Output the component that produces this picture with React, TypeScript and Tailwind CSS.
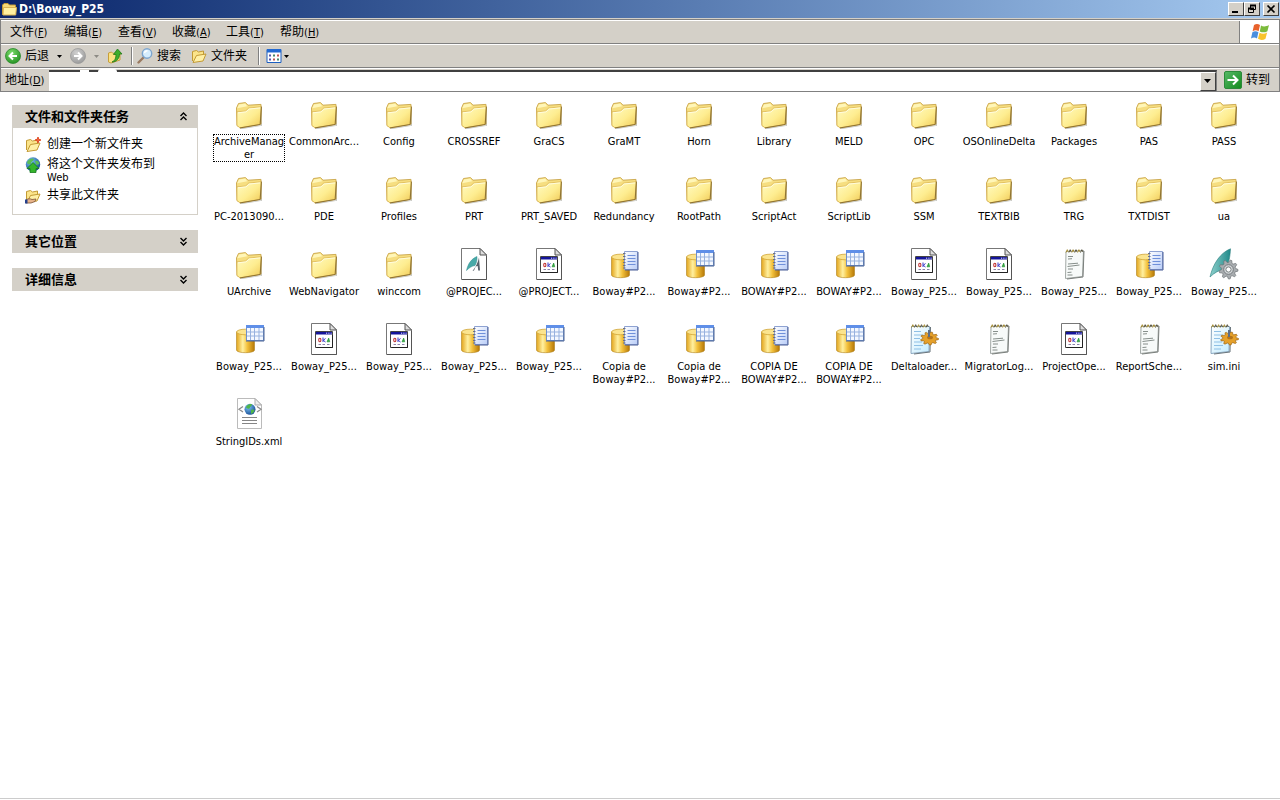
import type { ReactNode } from "react";

type Kind = "folder" | "pdl" | "win" | "dbLog" | "dbTable" | "note" | "ini" | "project" | "xml";

type Entry = { kind: Kind; lines: string[]; focused?: boolean };

const folder = (name: string): Entry => ({ kind: "folder", lines: [name] });
const file = (kind: Kind, ...lines: string[]): Entry => ({ kind, lines });

const entries: Entry[] = [
  { kind: "folder", lines: ["ArchiveManag", "er"], focused: true },
  ...[
    "CommonArc...", "Config", "CROSSREF", "GraCS", "GraMT", "Horn", "Library", "MELD", "OPC",
    "OSOnlineDelta", "Packages", "PAS", "PASS", "PC-2013090...", "PDE", "Profiles", "PRT",
    "PRT_SAVED", "Redundancy", "RootPath", "ScriptAct", "ScriptLib", "SSM", "TEXTBIB", "TRG",
    "TXTDIST", "ua", "UArchive", "WebNavigator", "winccom",
  ].map(folder),
  file("pdl", "@PROJEC..."),
  file("win", "@PROJECT..."),
  file("dbLog", "Boway#P2..."),
  file("dbTable", "Boway#P2..."),
  file("dbLog", "BOWAY#P2..."),
  file("dbTable", "BOWAY#P2..."),
  file("win", "Boway_P25..."),
  file("win", "Boway_P25..."),
  file("note", "Boway_P25..."),
  file("dbLog", "Boway_P25..."),
  file("project", "Boway_P25..."),
  file("dbTable", "Boway_P25..."),
  file("win", "Boway_P25..."),
  file("win", "Boway_P25..."),
  file("dbLog", "Boway_P25..."),
  file("dbTable", "Boway_P25..."),
  file("dbLog", "Copia de", "Boway#P2..."),
  file("dbTable", "Copia de", "Boway#P2..."),
  file("dbLog", "COPIA DE", "BOWAY#P2..."),
  file("dbTable", "COPIA DE", "BOWAY#P2..."),
  file("ini", "Deltaloader..."),
  file("note", "MigratorLog..."),
  file("win", "ProjectOpe..."),
  file("note", "ReportSche..."),
  file("ini", "sim.ini"),
  file("xml", "StringIDs.xml"),
];

function Gradients() {
  return (
    <svg className="absolute size-0" aria-hidden="true">
      <defs>
        <linearGradient id="gFolder" x1="0" y1="0" x2="1" y2="1">
          <stop offset="0" stopColor="#fffbc4" />
          <stop offset="0.55" stopColor="#feed90" />
          <stop offset="1" stopColor="#f0c955" />
        </linearGradient>
        <linearGradient id="gCyl" x1="0" y1="0" x2="1" y2="0">
          <stop offset="0" stopColor="#e3a51c" />
          <stop offset="0.35" stopColor="#fff0a0" />
          <stop offset="0.6" stopColor="#f3c13c" />
          <stop offset="1" stopColor="#b57706" />
        </linearGradient>
        <linearGradient id="gSheet" x1="0" y1="0" x2="1" y2="1">
          <stop offset="0" stopColor="#ffffff" />
          <stop offset="1" stopColor="#b9cdf8" />
        </linearGradient>
        <linearGradient id="gIni" x1="0" y1="0" x2="1" y2="1">
          <stop offset="0" stopColor="#ffffff" />
          <stop offset="1" stopColor="#c3ecff" />
        </linearGradient>
        <linearGradient id="gTeal" x1="0" y1="0" x2="1" y2="0">
          <stop offset="0" stopColor="#8fd0cc" />
          <stop offset="1" stopColor="#1f8a8a" />
        </linearGradient>
        <linearGradient id="gGo" x1="0" y1="0" x2="1" y2="1">
          <stop offset="0" stopColor="#58b968" />
          <stop offset="1" stopColor="#128a1c" />
        </linearGradient>
        <radialGradient id="gGreen" cx="0.4" cy="0.3" r="0.8">
          <stop offset="0" stopColor="#7bdc6a" />
          <stop offset="1" stopColor="#1d8a1d" />
        </radialGradient>
        <radialGradient id="gGray" cx="0.4" cy="0.3" r="0.8">
          <stop offset="0" stopColor="#d0d0d0" />
          <stop offset="1" stopColor="#959595" />
        </radialGradient>
        <radialGradient id="gGlobe" cx="0.35" cy="0.3" r="0.8">
          <stop offset="0" stopColor="#7cc4f4" />
          <stop offset="1" stopColor="#12458f" />
        </radialGradient>
      </defs>
    </svg>
  );
}

function Svg({ size = 32, children }: { size?: 16 | 32; children: ReactNode }) {
  return (
    <svg className={size === 32 ? "size-8 shrink-0" : "size-4 shrink-0"} viewBox={`0 0 ${size} ${size}`} aria-hidden="true">
      {children}
    </svg>
  );
}

function FolderArt() {
  return (
    <>
      <path d="M6 30.3 28 27.2V9l1 .5v18.3L9 31z" fill="#77776a" opacity="0.45" />
      <path d="M3.5 10 5.5 5.5 12.5 4.6 15 7.2 28 6.4V26L7.5 29.7 4 27.5z" fill="#f6de80" stroke="#c9a548" strokeWidth="0.9" strokeLinejoin="round" />
      <path d="M4.2 10.2 6 6.4 12.2 5.5 14.3 8.2z" fill="#fff6b8" />
      <path d="M4 13.8 12.5 13 15.8 10 28.2 8.8 27 26.4 7 29.8 4 27.6z" fill="url(#gFolder)" stroke="#d8b04c" strokeWidth="0.7" strokeLinejoin="round" />
      <path d="M28.4 8.6 27.2 26.5 7 29.9" fill="none" stroke="#8d7232" strokeWidth="1" />
      <path d="M5 14.8 13 13.9 16.2 11 27.2 9.9" fill="none" stroke="#fffde2" strokeWidth="0.9" />
    </>
  );
}

function Page() {
  return (
    <>
      <path d="M3.5.5H22L28.5 7V31.5H3.5z" fill="#fff" stroke="#777" />
      <path d="M22 .5 28.5 7H22z" fill="#ddd" stroke="#555" />
      <path d="M4 31.5H28.5V8" fill="none" stroke="#555" />
    </>
  );
}

function Cylinder() {
  return (
    <>
      <path d="M3.5 9v18c0 3.6 18 3.6 18 0V9z" fill="url(#gCyl)" stroke="#b0831f" strokeWidth="0.6" />
      <ellipse cx="12.5" cy="9" rx="9" ry="2.8" fill="#fbe48e" stroke="#d1a436" strokeWidth="0.8" />
    </>
  );
}

function Gear({ cx, cy, rx, ry, color, edge }: { cx: number; cy: number; rx: number; ry: number; color: string; edge: string }) {
  const pts = Array.from({ length: 36 }, (_, i) => {
    const a = (i * Math.PI) / 18;
    const k = i % 4 < 2 ? 1 : 0.74;
    return `${(cx + Math.cos(a) * rx * k).toFixed(2)},${(cy + Math.sin(a) * ry * k).toFixed(2)}`;
  }).join(" ");
  return <polygon points={pts} fill={color} stroke={edge} strokeWidth="0.7" strokeLinejoin="round" />;
}

function Spiral({ x, n }: { x: number; n: number }) {
  return (
    <>
      {Array.from({ length: n }, (_, i) => (
        <path key={i} d={`M${x + i * 2.9} 4.5l1.3-2.8 1 2.2`} fill="none" stroke={i % 2 ? "#55503a" : "#a58a2c"} strokeWidth="1" />
      ))}
    </>
  );
}

function FileIcon({ kind }: { kind: Kind }) {
  switch (kind) {
    case "folder":
      return <Svg><FolderArt /></Svg>;
    case "pdl":
      return (
        <Svg>
          <Page />
          <path d="M8.5 22.500C10 16 13 11 19 8.500c.2 3.500-.5 6.500-2 9-3 .5-5.500 2-8.500 5z" fill="#48aaa8" stroke="#2f8a8c" strokeWidth="0.500" />
          <path d="M14.500 23C17.500 19 20 14.500 21 9.500L22 22.500h-1.800l-.5-4.500-2 .5-1.700 4z" fill="#59636c" />
        </Svg>
      );
    case "win":
      return (
        <Svg>
          <Page />
          <path d="M7.500 8.500H24.500V24.500H7.500z" fill="#fff" stroke="#444" />
          <path d="M8 9h16v2.500H8z" fill="#14149a" />
          <path d="M18 10.200h1.200M20.300 10.200h1.200M22.600 10.200h1" stroke="#e6e8ff" />
          <path d="M8.500 24.500h16V12" fill="none" stroke="#222" />
          <ellipse cx="11.800" cy="17" rx="1.100" ry="1.800" fill="none" stroke="#c03030" strokeWidth="1.100" />
          <path d="M15 14.500v4.500M17.500 15.500 15.300 17.300 17.500 19" fill="none" stroke="#3434c8" strokeWidth="1" />
          <path d="M19 18.800 20.700 15l1 3.800z" fill="#38b048" stroke="#1a8a2c" strokeWidth="0.600" />
          <path d="M10.500 21.500h2.500M14.500 21.500h2.500M19 21.500h2.500" stroke="#8a80a8" />
        </Svg>
      );
    case "dbLog":
      return (
        <Svg>
          <Cylinder />
          <path d="M16.500 3.500H29.500V21.500H16.500z" fill="url(#gSheet)" stroke="#8ea2d2" />
          <path d="M30 4v18H17" fill="none" stroke="#4a5f98" />
          <path d="M19.500 7.500h8M19.500 10.500h8M19.500 13.500h8M19.500 16.500h8" stroke="#6f90da" />
          <path d="M15 5.500h2.500M15 8.500h2.500M15 11.500h2.500M15 14.500h2.500M15 17.500h2.500M15 20h2.500" stroke="#6a7084" />
        </Svg>
      );
    case "dbTable":
      return (
        <Svg>
          <Cylinder />
          <path d="M13.500 2.500H30.500V17.500H13.500z" fill="#f4f8ff" stroke="#6f8fca" />
          <path d="M13 2h18v3H13z" fill="#5f8fe8" />
          <path d="M17.500 5v12M21.500 5v12M26 5v12M14 9h16.500M14 13h16.500" stroke="#97b2df" />
          <path d="M13 18h18V4" fill="none" stroke="#4d6495" />
        </Svg>
      );
    case "note":
      return (
        <Svg>
          <path d="M8 3.500 25.500 2.500 24.500 28.500 7.500 30.500z" fill="#f7faf9" stroke="#a2a8a5" />
          <path d="M26 3 25 29 9 31" fill="none" stroke="#7a7f7c" />
          <Spiral x={8} n={6} />
          <path d="M10 8.500h5M10 11l4-.3M10 16l10-.8M9.500 18.500l12-1.500M10 21h5M9.500 24.500l4-.3M9.500 27h5" stroke="#79827e" strokeWidth="0.9" />
        </Svg>
      );
    case "ini":
      return (
        <Svg>
          <path d="M3.500 3.500H21.500L21 28.500 3 30.500z" fill="url(#gIni)" stroke="#8ba8c0" />
          <path d="M22.500 4 22 29 6 31" fill="none" stroke="#69757c" />
          <Spiral x={3.500} n={6} />
          <path d="M6 8.500h7M6 12h9M6 15.500h6M6 19h8M6 22.500h9M6 26h7" stroke="#8fc0e6" />
          <Gear cx={21.500} cy={15.500} rx={9} ry={6.500} color="#e5a02a" edge="#9c6412" />
          <ellipse cx="22" cy="14.500" rx="3" ry="1.800" fill="#b4741a" />
          <path d="M21 7v7" stroke="#5c6d86" strokeWidth="2" />
        </Svg>
      );
    case "project":
      return (
        <Svg>
          <path d="M2 29C5 16 12 5 22.500.8 22 9 21 16 17 21 11 22 6 25 2 29z" fill="url(#gTeal)" stroke="#2d7f80" strokeWidth="0.6" />
          <Gear cx={20.500} cy={21.500} rx={9.500} ry={9.500} color="#a9adb0" edge="#6d7276" />
          <circle cx="20.500" cy="21.500" r="4.800" fill="#d6d9db" stroke="#74797c" />
          <circle cx="20.500" cy="21.500" r="2.600" fill="#fff" stroke="#787f80" />
        </Svg>
      );
    case "xml":
      return (
        <Svg>
          <path d="M4.500.5H22L28.500 7V30.500H4.500z" fill="#fff" stroke="#bbb" />
          <path d="M22 .5V7h6.500z" fill="#eee" stroke="#aaa" />
          <path d="M10 8.500 6 11.300 10 14M24 8.500l4 2.800-4 2.700" fill="none" stroke="#8a8a8a" strokeWidth="1.300" />
          <circle cx="17" cy="11.300" r="5.500" fill="url(#gGlobe)" />
          <path d="M13 9c2-3 5-3.500 6-2.500-.5 2-2 2-2.500 4-1.500.5-3 0-3.500-1.500zM18 12c2-1 3.500 0 3.500.5-.5 2-2 3-3.500 3.500z" fill="#4fb54a" />
          <path d="M9 19.500h15M9 22.500h15M9 25.500h15" stroke="#858585" />
        </Svg>
      );
  }
}

function SmallFolder() {
  return (
    <Svg size={16}>
      <path d="M.5 4 2 2.500h4L7.500 4h6v9.500H.5z" fill="#f5d876" stroke="#c39a34" />
      <path d="M1.500 6.500h13l-.8 7.500H1z" fill="#fff0a0" stroke="#d9b352" />
    </Svg>
  );
}

function OpenFolderPaths() {
  return (
    <>
      <path d="M1.500 13V3.500l4-1L7.500 4l5-1v4" fill="#fbe48a" stroke="#c39a34" />
      <path d="M2 14.500 5.500 7.500l9.500-1.500-3 7z" fill="#fff0a6" stroke="#c39a34" strokeLinejoin="round" />
    </>
  );
}

function Disc({ gray = false }: { gray?: boolean }) {
  return (
    <Svg size={16}>
      <circle cx="8" cy="8" r="7.500" fill={gray ? "url(#gGray)" : "url(#gGreen)"} stroke={gray ? "#9a9a9a" : "#2b8a2b"} strokeWidth="0.800" />
      <path d={gray ? "M4 8h7M8 4.500 11.500 8 8 11.500" : "M12 8H5M8 4.500 4.500 8 8 11.500"} fill="none" stroke="#fff" strokeWidth="2" />
    </Svg>
  );
}

function Caret({ dim = false }: { dim?: boolean }) {
  return (
    <svg className="h-[3px] w-[5px] shrink-0" viewBox="0 0 5 3" aria-hidden="true">
      <path d="M0 0h5L2.500 3z" fill={dim ? "#8c8a84" : "#000"} />
    </svg>
  );
}

function Chevrons({ up = false }: { up?: boolean }) {
  return (
    <svg className="h-[9px] w-[7px]" viewBox="0 0 7 9" aria-hidden="true">
      <path
        d={up ? "M.5 4 3.500 1l3 3M.5 8l3-3 3 3" : "M.5 1l3 3 3-3M.5 5l3 3 3-3"}
        fill="none"
        stroke="#000"
        strokeWidth="1.400"
      />
    </svg>
  );
}

function Accel({ k }: { k: string }) {
  return <span className="text-[11px]">(<u>{k}</u>)</span>;
}

function CaptionButton({ label, children }: { label: string; children: ReactNode }) {
  return (
    <button
      aria-label={label}
      className="flex h-[14px] w-4 items-center justify-center border border-t-white border-l-white border-r-[#404040] border-b-[#404040] bg-[#d4d0c8]"
    >
      <svg className="h-[10px] w-3" viewBox="0 0 12 10" aria-hidden="true">{children}</svg>
    </button>
  );
}

function TaskHeader({ title, open = false }: { title: string; open?: boolean }) {
  return (
    <button className="flex h-[23px] w-full items-center justify-between bg-[#d4d0c8] pr-[11px] pl-[13px] text-[13px] font-bold" aria-expanded={open}>
      <span>{title}</span>
      <Chevrons up={open} />
    </button>
  );
}

function Task({ icon, children }: { icon: ReactNode; children: ReactNode }) {
  return (
    <li>
      <a href="#task" className="flex gap-[6px] leading-[13px]">
        {icon}
        <span className="pt-px">{children}</span>
      </a>
    </li>
  );
}

const menus: [string, string][] = [
  ["文件", "F"],
  ["编辑", "E"],
  ["查看", "V"],
  ["收藏", "A"],
  ["工具", "T"],
  ["帮助", "H"],
];

export default function App() {
  return (
    <div className="flex min-h-screen flex-col bg-white font-['DejaVu_Sans_Condensed','DejaVu_Sans','Noto_Sans_CJK_SC',sans-serif] text-[12px] leading-[14px] text-black">
      <Gradients />
      <header className="bg-[#d4d0c8]">
        <div className="flex h-[18px] items-center bg-linear-to-r from-[#0a246a] to-[#a6caf0] pr-px pl-[2px]">
          <SmallFolder />
          <h1 className="ml-px grow text-[12px] font-bold text-white">D:\Boway_P25</h1>
          <div className="flex">
            <CaptionButton label="最小化"><path d="M2 8h6" stroke="#000" strokeWidth="2" /></CaptionButton>
            <CaptionButton label="还原">
              <path d="M4.500 1.500h5v4h-5zM2.500 4.500h5v4h-5z" fill="#d4d0c8" stroke="#000" />
              <path d="M4 1.500h6M2 4.500h6" stroke="#000" strokeWidth="2" />
            </CaptionButton>
            <span className="w-[3px]" />
            <CaptionButton label="关闭"><path d="M2.500 1.500l7 7M9.500 1.500l-7 7" stroke="#000" strokeWidth="1.700" /></CaptionButton>
          </div>
        </div>

        <div className="mt-px border-x border-t border-[#808080]">
          <nav className="flex h-6 border-t border-b border-t-white border-b-[#808080]">
            <div className="flex grow items-center pl-[9px]">
              {menus.map(([name, key]) => (
                <button key={key} className="w-[54px] text-left whitespace-nowrap">{name}<Accel k={key} /></button>
              ))}
            </div>
            <div className="flex w-10 items-center justify-center border-l border-[#808080] bg-white">
              <svg className="h-[18px] w-5" viewBox="0 0 20 18" aria-hidden="true">
                <path d="M4 2c2-1.500 4-1.500 6 0L8.600 8.200c-2-1.300-4-1.300-6 0z" fill="#e8622c" />
                <path d="M11 2.500c2 1.300 5 1.300 8-.5l-1.600 6.200c-2.500 1.500-5 1.500-7.600.3z" fill="#7cbb3c" />
                <path d="M2.400 9.300c2-1.300 4-1.300 6 0L7 15.500c-2-1.500-4-1.300-6 0z" fill="#4a8ede" />
                <path d="M9.500 9.700c2.500 1.300 5 1.300 7.600-.3l-1.600 6.300c-2.500 1.500-5 1.600-7.500.1z" fill="#f8c32c" />
              </svg>
            </div>
          </nav>

          <div className="flex h-6 items-center border-t border-b border-t-white border-b-[#808080] pl-1" role="toolbar" aria-label="标准按钮">
            <button className="flex items-center gap-1"><Disc />后退</button>
            <button className="ml-2 flex h-4 items-center" aria-label="后退列表"><Caret /></button>
            <button className="ml-2 flex items-center" aria-label="前进"><Disc gray /></button>
            <button className="ml-2 flex h-4 items-center" aria-label="前进列表"><Caret dim /></button>
            <button className="ml-2" aria-label="向上">
              <Svg size={16}>
                <path d="M1.500 14V5l3-1L6 5.500l7-1.500V12l-9 3z" fill="#fbe282" stroke="#c79f3a" />
                <path d="M5 14c3-1 4-4 4-7.500H6.500L10.500 1l4.500 5h-2.500c0 4-2.500 8-7.500 8z" fill="#3fae2c" stroke="#217a18" strokeWidth="0.800" />
              </Svg>
            </button>
            <span className="ml-2 mr-1 h-[18px] w-[2px] border-l border-r border-l-[#808080] border-r-white" />
            <button className="flex items-center gap-1">
              <Svg size={16}>
                <path d="M1.500 14.500 6.500 9.500" stroke="#9b7b62" strokeWidth="2.400" strokeLinecap="round" />
                <circle cx="10" cy="5.500" r="4.700" fill="#d6edfd" stroke="#7ea6cf" strokeWidth="1.400" />
                <path d="M7.500 5c.3-1.500 1.500-2.300 3-2.300" fill="none" stroke="#fff" strokeWidth="1.400" />
              </Svg>
              搜索
            </button>
            <button className="ml-[10px] flex items-center gap-1"><Svg size={16}><OpenFolderPaths /></Svg>文件夹</button>
            <span className="mr-[6px] ml-[11px] h-[18px] w-[2px] border-l border-r border-l-[#808080] border-r-white" />
            <button className="flex items-center gap-[2px]" aria-label="查看方式">
              <Svg size={16}>
                <path d="M1 1.500h14v13H1z" fill="#fff" stroke="#1c5fc0" />
                <path d="M1 1h14v3.500H1z" fill="#2269d2" />
                <path d="M3 7.500h2M3 11.500h2" stroke="#55a" strokeWidth="2" />
                <path d="M7 7.500h2M11 11.500h2" stroke="#486" strokeWidth="2" />
                <path d="M11 7.500h2M7 11.500h2" stroke="#b55" strokeWidth="2" />
              </Svg>
              <Caret />
            </button>
          </div>

          <div className="flex h-6 items-center border-t border-b border-t-white border-b-[#808080] pl-1">
            <label htmlFor="address" className="w-11 whitespace-nowrap">地址<Accel k="D" /></label>
            <div className="relative flex h-[21px] grow border-t-2 border-r border-t-[#404040] border-r-[#808080] bg-white">
              <span className="absolute -top-[2px] left-[31px] h-[2px] w-[9px] bg-white" />
              <span className="absolute -top-[3px] left-[49px] h-[3px] w-[19px] rounded-t-sm bg-white" />
              <input id="address" type="text" className="min-w-0 grow bg-white px-1 outline-none" />
              <button
                aria-label="地址列表"
                className="flex w-4 items-center justify-center border border-t-white border-l-white border-r-[#404040] border-b-[#404040] bg-[#d4d0c8]"
              >
                <svg className="h-1 w-[7px]" viewBox="0 0 7 4" aria-hidden="true"><path d="M0 0h7L3.500 4z" /></svg>
              </button>
            </div>
            <button className="mr-[9px] ml-[7px] flex items-center gap-1">
              <svg className="size-[18px]" viewBox="0 0 18 18" aria-hidden="true">
                <rect x="0.500" y="0.500" width="17" height="17" rx="1.500" fill="url(#gGo)" stroke="#2c8a3a" />
                <path d="M3.500 9h10M9 4.500 13.500 9 9 13.500" fill="none" stroke="#fff" strokeWidth="2" />
              </svg>
              转到
            </button>
          </div>
        </div>
      </header>

      <div className="flex grow border-b border-[#cccccc]">
        <aside className="flex w-[198px] shrink-0 flex-col gap-[15px] pt-[13px] pl-3">
          <section>
            <TaskHeader title="文件和文件夹任务" open />
            <ul className="flex h-[87px] flex-col gap-1 border border-t-0 border-[#d4d0c8] pt-[9px] pr-7 pl-3">
              <Task
                icon={
                  <Svg size={16}>
                    <OpenFolderPaths />
                    <path d="M13 0l.8 2.200L16 3l-2.200.8L13 6l-.8-2.200L10 3l2.200-.8z" fill="#f0603a" stroke="#e0502a" />
                  </Svg>
                }
              >
                创建一个新文件夹
              </Task>
              <Task
                icon={
                  <Svg size={16}>
                    <circle cx="8" cy="7.500" r="7.200" fill="url(#gGlobe)" />
                    <path d="M2 5c2-4 6-4 7-3-1 3-3 2-3 5-2 1-4 0-4-2zM10 4c3-1 4 1 4.500 3l-3 1z" fill="#5bbd58" />
                    <path d="M8 5.500 14 11.500h-3V15.500H5V11.500H2z" fill="#35b52c" stroke="#157a1a" strokeWidth="0.800" />
                  </Svg>
                }
              >
                将这个文件夹发布到 <span className="text-[11px]">Web</span>
              </Task>
              <Task
                icon={
                  <Svg size={16}>
                    <OpenFolderPaths />
                    <path d="M1 12c2-1.500 4-1.500 6-.5l4-.5-1 2.500-4 1.500H1z" fill="#e8b48a" stroke="#7a5234" strokeWidth="0.800" />
                    <path d="M0 11.500h2.500V15.500H0z" fill="#26418c" />
                  </Svg>
                }
              >
                共享此文件夹
              </Task>
            </ul>
          </section>
          <TaskHeader title="其它位置" />
          <TaskHeader title="详细信息" />
        </aside>

        <main className="grow pt-[6px] pl-[13px]">
          <ul className="grid auto-rows-[75px] grid-cols-[repeat(auto-fill,75px)]">
            {entries.map((entry, i) => (
              <li key={i}>
                <button className="flex w-full flex-col items-center gap-1 pl-px">
                  <FileIcon kind={entry.kind} />
                  <span
                    className={
                      entry.focused
                        ? "w-[72px] border border-dotted border-black text-[11px] leading-[13px]"
                        : "w-[72px] border border-transparent text-[11px] leading-[13px]"
                    }
                  >
                    {entry.lines.map((line) => (
                      <span key={line} className="flex justify-center whitespace-nowrap">{line}</span>
                    ))}
                  </span>
                </button>
              </li>
            ))}
          </ul>
        </main>
      </div>
      <div className="h-px bg-white" />
    </div>
  );
}
